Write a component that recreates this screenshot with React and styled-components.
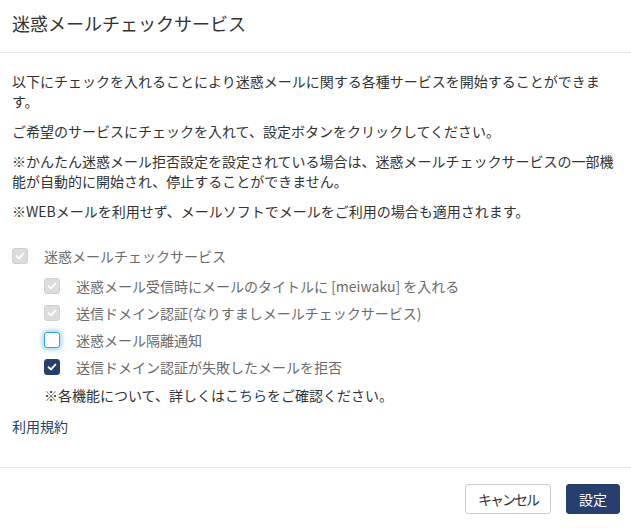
import React, { useState } from 'react';
import styled, { createGlobalStyle } from 'styled-components';

const GlobalStyle = createGlobalStyle`
  body {
    margin: 0;
    background: #ffffff;
    font-family: "Noto Sans CJK JP", "Noto Sans", sans-serif;
    color: #333333;
    font-size: 14px;
  }
`;

const NAVY = '#263f6e';

const Dialog = styled.div`
  width: 631px;
  background: #fff;
`;

const Header = styled.div`
  padding: 9px 12px 15px;
  border-bottom: 1px solid #e5e5e5;
`;

const Title = styled.h4`
  margin: 0;
  font-size: 18px;
  font-weight: 400;
  line-height: 28px;
  color: #333;
`;

const Body = styled.div`
  padding: 18px 12px 14px;
`;

const Para = styled.p`
  margin: 0 0 10px;
  line-height: 20px;
`;

const Options = styled.div`
  margin-top: 17px;
`;

const Row = styled.label`
  display: flex;
  align-items: center;
  gap: 16px;
  height: ${(p) => (p.$main ? '35px' : '26.8px')};
  margin-left: ${(p) => (p.$indent ? '32px' : '0')};
  color: #6b6b6b;
  line-height: 20px;
  cursor: ${(p) => (p.$disabled ? 'default' : 'pointer')};
`;

const Box = styled.span`
  flex: none;
  width: 14px;
  height: 14px;
  border-radius: 3px;
  display: flex;
  align-items: center;
  justify-content: center;
  border: 1px solid ${(p) => (p.$state === 'disabled' ? '#cfcfcf' : p.$state === 'checked' ? NAVY : '#3aa2f0')};
  background: ${(p) => (p.$state === 'disabled' ? '#dcdcdc' : p.$state === 'checked' ? NAVY : '#fff')};
  box-shadow: ${(p) => (p.$state === 'focus' ? '0 0 4px 2px rgba(58, 162, 240, 0.45)' : 'none')};
`;

const Note = styled.div`
  margin: 5px 0 0 32px;
  line-height: 20px;
  color: #333;
`;

const Link = styled.a`
  color: ${NAVY};
  text-decoration: none;
  cursor: pointer;
`;

const Terms = styled.div`
  margin-top: 11px;
  line-height: 20px;
`;

const Footer = styled.div`
  margin-top: 17px;
  border-top: 1px solid #e5e5e5;
  padding: 16px 11px 14px;
  display: flex;
  justify-content: flex-end;
  gap: 15px;
`;

const Button = styled.button`
  font-family: inherit;
  font-size: 14px;
  line-height: 20px;
  padding: 4px 12px 4px;
  height: 30px;
  border-radius: 3px;
  cursor: pointer;
  letter-spacing: ${(p) => (p.$primary ? '0' : '-2px')};
  border: 1px solid ${(p) => (p.$primary ? NAVY : '#cccccc')};
  background: ${(p) => (p.$primary ? NAVY : '#ffffff')};
  color: ${(p) => (p.$primary ? '#ffffff' : '#333333')};
`;

const Check = () => (
  <svg width="10" height="10" viewBox="0 0 10 10">
    <path d="M1.6 5.2 L4 7.4 L8.4 2.6" fill="none" stroke="#fff" strokeWidth="1.9" strokeLinecap="round" strokeLinejoin="round" />
  </svg>
);

const CheckRow = ({ state, main, indent, children, onToggle }) => (
  <Row $main={main} $indent={indent} $disabled={state === 'disabled'} onClick={onToggle}>
    <Box $state={state}>{state !== 'focus' && <Check />}</Box>
    <span>{children}</span>
  </Row>
);

export default function App() {
  const [isolation, setIsolation] = useState(false);
  const [reject, setReject] = useState(true);

  return (
    <Dialog>
      <GlobalStyle />
      <Header>
        <Title>迷惑メールチェックサービス</Title>
      </Header>
      <Body>
        <Para>以下にチェックを入れることにより迷惑メールに関する各種サービスを開始することができます。</Para>
        <Para>ご希望のサービスにチェックを入れて、設定ボタンをクリックしてください。</Para>
        <Para>※かんたん迷惑メール拒否設定を設定されている場合は、迷惑メールチェックサービスの一部機能が自動的に開始され、停止することができません。</Para>
        <Para>※WEBメールを利用せず、メールソフトでメールをご利用の場合も適用されます。</Para>

        <Options>
          <CheckRow state="disabled" main>迷惑メールチェックサービス</CheckRow>
          <CheckRow state="disabled" indent>迷惑メール受信時にメールのタイトルに [meiwaku] を入れる</CheckRow>
          <CheckRow state="disabled" indent>送信ドメイン認証(なりすましメールチェックサービス)</CheckRow>
          <CheckRow state={isolation ? 'checked' : 'focus'} indent onToggle={() => setIsolation(!isolation)}>
            迷惑メール隔離通知
          </CheckRow>
          <CheckRow state={reject ? 'checked' : 'focus'} indent onToggle={() => setReject(!reject)}>
            送信ドメイン認証が失敗したメールを拒否
          </CheckRow>
        </Options>

        <Note>
          ※各機能について、詳しくは<Link>こちら</Link>をご確認ください。
        </Note>
        <Terms>
          <Link>利用規約</Link>
        </Terms>
      </Body>
      <Footer>
        <Button>キャンセル</Button>
        <Button $primary>設定</Button>
      </Footer>
    </Dialog>
  );
}
